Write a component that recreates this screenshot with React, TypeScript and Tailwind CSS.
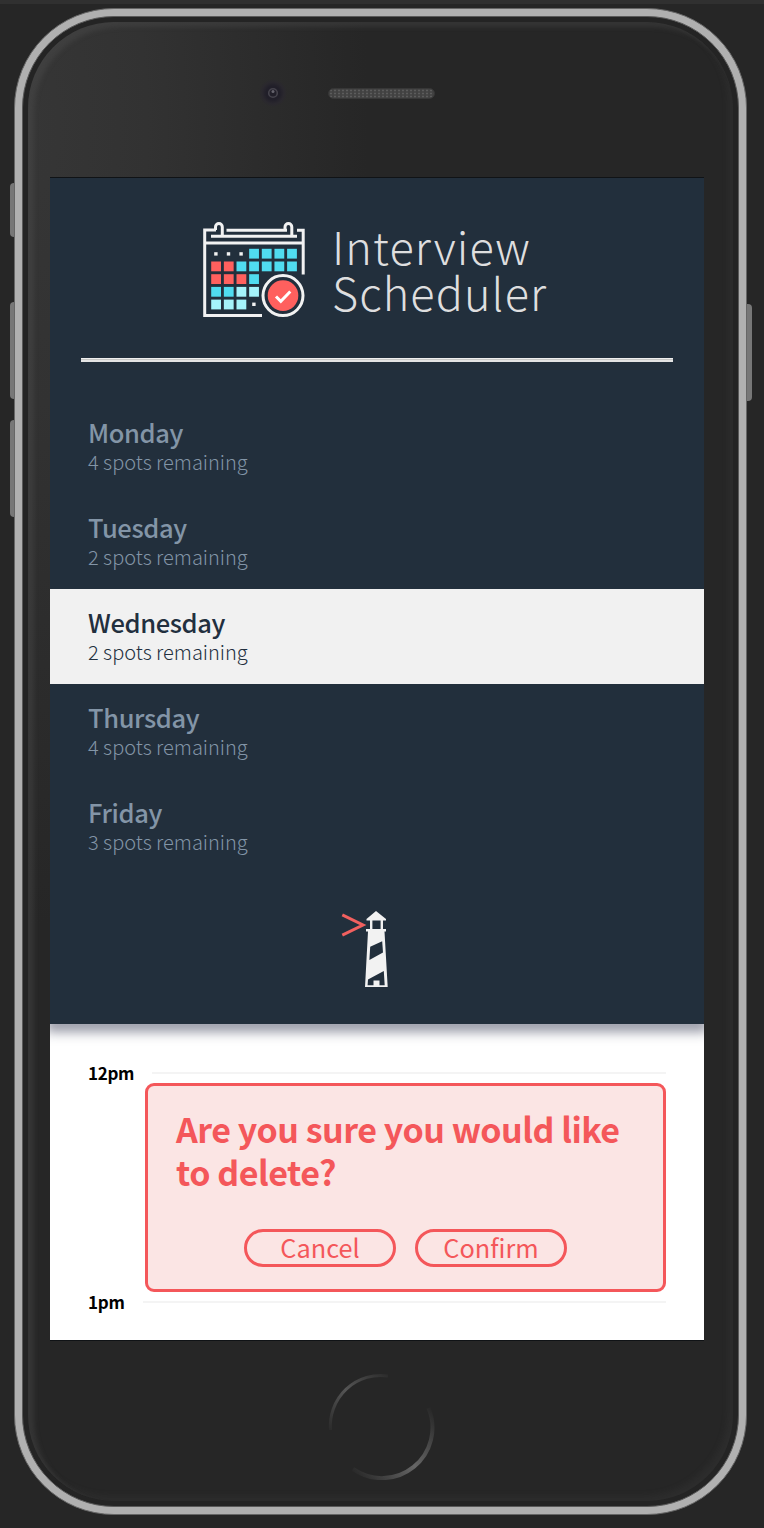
import React from "react";

const days = [
  { name: "Monday", spots: 4 },
  { name: "Tuesday", spots: 2 },
  { name: "Wednesday", spots: 2, selected: true },
  { name: "Thursday", spots: 4 },
  { name: "Friday", spots: 3 },
];

const C = "#50dcf0";
const R = "#ff605e";
const L = "#a5f3fb";

const cells: [number, number, string][] = [
  [3, 0, C], [4, 0, C], [5, 0, C], [6, 0, C],
  [0, 1, R], [1, 1, R], [2, 1, C], [3, 1, C], [4, 1, C], [5, 1, C], [6, 1, C],
  [0, 2, R], [1, 2, R], [2, 2, R], [3, 2, C],
  [0, 3, C], [1, 3, C], [2, 3, L], [3, 3, L],
  [0, 4, L], [1, 4, L], [2, 4, L],
];

function CalendarLogo() {
  return (
    <svg className="h-[120px] w-[130px] shrink-0" viewBox="0 0 130 120" fill="none">
      <g stroke="#f2f2f2" strokeWidth="3">
        <path d="M26 20H14.7V105.6H72" />
        <path d="M36.5 20.2H97" />
        <path d="M107 20.2H113.2V64.5" />
        <path d="M21 26.3H107" />
        <path d="M14.7 33H113" />
        <path d="M32.3 26V17a3.4 3.4 0 0 0-6.8 0v3" />
        <path d="M101.8 26V17a3.4 3.4 0 0 0-6.8 0v3" />
      </g>
      {cells.map(([x, y, color]) => (
        <rect key={`${x}-${y}`} x={21.2 + x * 12.65} y={38.8 + y * 12.7} width="9.8" height="9.8" fill={color} />
      ))}
      <g fill="#f2f2f2">
        <rect x="24.2" y="42.2" width="3.4" height="3.4" />
        <rect x="36.8" y="42.2" width="3.4" height="3.4" />
        <rect x="49.4" y="42.2" width="3.4" height="3.4" />
        <rect x="62.2" y="92.6" width="3.4" height="3.4" />
      </g>
      <circle cx="93" cy="85.6" r="20" fill="#222f3c" stroke="#f2f2f2" strokeWidth="3" />
      <circle cx="93" cy="85.6" r="15.3" fill={R} />
      <path d="M86 86.5L90.8 91.3L100.3 81.5" stroke="#fff" strokeWidth="3" />
    </svg>
  );
}

function Lighthouse() {
  return (
    <svg className="h-[100px] w-[75px]" viewBox="0 0 75 100" fill="none">
      <path d="M12.3 14.8L33 25L12.3 35.2" stroke="#f2605f" strokeWidth="3" />
      <path d="M46 11L56 19V20.5H36.5V19Z" fill="#f2f2f2" />
      <path d="M41.2 20V30M51.8 20V30" stroke="#f2f2f2" strokeWidth="2.4" />
      <path d="M36 29H56V31.5H54.5L57.7 87H35L38 31.5H36Z" fill="#f2f2f2" />
      <path d="M40.2 46.8L52.2 41.3L53 52.5L39.4 60Z" fill="#222f3c" />
      <path d="M38 79.5L53.8 71L54.7 85.3H49.5V80.5H43.5V85.3H37.6Z" fill="#222f3c" />
    </svg>
  );
}

function HomeButton() {
  return (
    <svg className="mt-[31px] h-[108px] w-[108px]" viewBox="0 0 108 108" fill="none">
      <defs>
        <linearGradient id="homeTop" x1="4" y1="66" x2="66" y2="0" gradientUnits="userSpaceOnUse">
          <stop offset="0" stopColor="#555" stopOpacity="0" />
          <stop offset="0.5" stopColor="#555" />
          <stop offset="1" stopColor="#555" stopOpacity="0" />
        </linearGradient>
        <linearGradient id="homeBottom" x1="104" y1="34" x2="26" y2="104" gradientUnits="userSpaceOnUse">
          <stop offset="0" stopColor="#666" stopOpacity="0" />
          <stop offset="0.5" stopColor="#666" />
          <stop offset="1" stopColor="#666" stopOpacity="0" />
        </linearGradient>
      </defs>
      <path d="M3.5 58A50.5 50.5 0 0 1 61 3.9" stroke="url(#homeTop)" strokeWidth="3" />
      <path d="M101.5 36A50.5 50.5 0 0 1 26 97" stroke="url(#homeBottom)" strokeWidth="4" />
    </svg>
  );
}

function ActionButton({ children }: { children: React.ReactNode }) {
  return (
    <button className="flex h-[38px] w-[152px] items-center justify-center rounded-full border-3 border-[#f4575a] pb-px text-[25.3px] leading-none text-[#f4575a]">
      {children}
    </button>
  );
}

function Hour({ label, lineClass }: { label: string; lineClass: string }) {
  return (
    <div className="flex h-[24px] items-center justify-between px-[38px]">
      <h4 className="text-[17px] leading-[24px] font-bold tracking-[-0.3px] text-black">{label}</h4>
      <div className={`h-[2px] bg-[#f4f4f4] ${lineClass}`} />
    </div>
  );
}

export default function App() {
  return (
    <div className="relative h-[1528px] w-[764px] overflow-hidden bg-[#262626] font-['Noto_Sans_CJK_SC','Noto_Sans',sans-serif]">
      <div className="h-1 bg-[#303030]" />
      <div className="absolute top-[183px] left-[10px] h-[54px] w-2 rounded-l bg-[#777]" />
      <div className="absolute top-[302px] left-[10px] h-[97px] w-2 rounded-l bg-[#777]" />
      <div className="absolute top-[420px] left-[10px] h-[97px] w-2 rounded-l bg-[#777]" />
      <div className="absolute top-[304px] left-[744px] h-[97px] w-2 rounded-r bg-[#777]" />

      <div className="relative mt-1 ml-[14px] h-[1507px] w-[733px] rounded-[100px] border border-[#666] bg-[#b0b0b0] p-[7px]">
        <div className="h-full w-full rounded-[92px] border border-[#5a5a5a] bg-[#242424] p-[5px]">
          <div className="flex h-full w-full flex-col items-center rounded-[86px] bg-[radial-gradient(ellipse_340px_800px_at_0%_7%,#363636_0%,#323232_35%,#262626_100%)] shadow-[inset_6px_5px_5px_rgba(90,90,90,0.3),inset_-5px_-5px_6px_rgba(80,80,80,0.16)]">
            <div className="flex h-[155px] w-full items-start pt-[57px] pl-[231px]">
              <div className="flex h-[28px] w-[28px] items-center justify-center rounded-full bg-[radial-gradient(circle,#211f29_35%,#2a282e_55%,transparent_72%)]">
                <svg className="h-[12px] w-[12px]" viewBox="0 0 12 12" fill="none">
                  <circle cx="6" cy="6" r="4.3" stroke="#45434c" strokeWidth="1.6" />
                  <circle cx="6" cy="4.4" r="1.5" fill="#66646e" />
                </svg>
              </div>
              <div className="mt-[9px] ml-[41px] h-[11px] w-[107px] rounded-full border border-[#373737] bg-[#424242] bg-[radial-gradient(circle,#5c5c5c_28%,transparent_50%)] bg-[length:4px_3px]" />
            </div>

            <main className="mr-[7px] flex h-[1164px] w-[654px] shrink-0 flex-col border-y border-[#101316] bg-white">
              <section className="relative flex h-[846px] shrink-0 flex-col items-center bg-[#222f3c]">
                <header className="flex h-[180px] w-full items-start pt-[32px] pl-[140px]">
                  <CalendarLogo />
                  <div className="mt-[13px] ml-[12px] text-[45px] leading-[46px] font-light tracking-[1.1px] text-[#dededf]">
                    <div>Interview</div>
                    <div>Scheduler</div>
                  </div>
                </header>
                <div className="h-[4px] w-[592px] border-t-1 border-b-2 border-t-[#efefef] border-b-[#e4e4e4] bg-[#c8c8c6]" />
                <nav className="mt-[37px] w-full">
                  {days.map((day) => (
                    <div
                      key={day.name}
                      className={
                        day.selected
                          ? "flex h-[95px] flex-col bg-[#f1f1f1] pt-[16px] pl-[38px] text-[#222f3e]"
                          : "flex h-[95px] flex-col pt-[16px] pl-[38px] text-[#8395a7]"
                      }
                    >
                      <h2 className="text-[25.5px] leading-[34px] font-medium tracking-[-0.38px]">{day.name}</h2>
                      <h3 className="mt-px text-[20px] leading-[24px] font-light">{day.spots} spots remaining</h3>
                    </div>
                  ))}
                </nav>
                <div className="mt-[26px] mr-[19px]">
                  <Lighthouse />
                </div>
              </section>

              <section className="flex min-h-0 flex-1 flex-col overflow-hidden">
                <div className="-mt-2 h-2 shrink-0 shadow-[0_4px_12px_4px_rgba(45,50,75,0.5)]" />
                <div className="mt-[37px]">
                  <Hour label="12pm" lineClass="w-[514px]" />
                </div>
                <div className="mt-[-2px] ml-[95px] flex h-[209px] w-[521px] shrink-0 flex-col rounded-[9px] border-3 border-[#f4575a] bg-[#fbe5e4] px-[28px] pt-[21px]">
                  <h1 className="text-[34px] leading-[43px] font-bold tracking-[-0.48px] whitespace-nowrap text-[#f4575a]">
                    Are you sure you would like
                    <br />
                    to delete?
                  </h1>
                  <div className="mt-[36px] flex justify-center gap-[19px]">
                    <ActionButton>Cancel</ActionButton>
                    <ActionButton>Confirm</ActionButton>
                  </div>
                </div>
                <div className="-mt-[2px]">
                  <Hour label="1pm" lineClass="w-[523px]" />
                </div>
              </section>
            </main>
            <HomeButton />
          </div>
        </div>
      </div>
    </div>
  );
}
